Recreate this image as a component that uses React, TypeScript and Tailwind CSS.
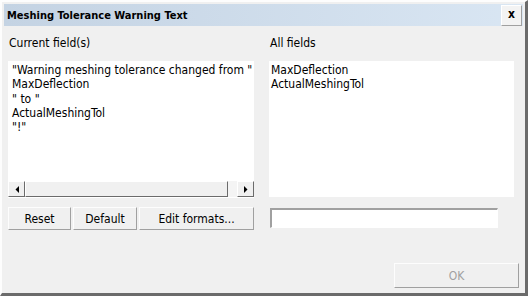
import React from "react";

const font = { fontFamily: '"DejaVu Sans Condensed", "DejaVu Sans", "Liberation Sans", sans-serif' };

function ArrowLeft() {
  return (
    <svg width="4" height="7" viewBox="0 0 4 7">
      <polygon points="4,0 4,7 0.5,3.5" fill="#000" />
    </svg>
  );
}
function ArrowRight() {
  return (
    <svg width="4" height="7" viewBox="0 0 4 7">
      <polygon points="0,0 0,7 3.5,3.5" fill="#000" />
    </svg>
  );
}

export default function App() {
  const lines = [
    '"Warning meshing tolerance changed from "',
    "MaxDeflection",
    '" to "',
    "ActualMeshingTol",
    '"!"',
  ];
  return (
    <div
      className="w-[528px] h-[296px] bg-[#f0f0f0] border-l-2 border-t-2 border-l-[#fdfdfd] border-t-[#fdfdfd] border-r-[3px] border-b-[3px] border-r-[#6b6b6b] border-b-[#6b6b6b] text-[12px] text-black flex flex-col"
      style={font}
    >
      <div className="p-[2px] flex flex-col flex-1">
        {/* Title bar */}
        <div className="h-[22px] flex items-center justify-between pl-[3px] pr-[1px] bg-gradient-to-r from-[#c4d3e3] to-[#d9e6f3]">
          <span className="font-bold text-[11px] leading-none">Meshing Tolerance Warning Text</span>
          <div className="w-[21px] h-[21px] flex items-center justify-center bg-[#f3f3f3] border border-t-[#ffffff] border-l-[#ffffff] border-r-[#a0a0a0] border-b-[#a0a0a0] text-[12px] font-bold leading-none pb-[2px]">
            x
          </div>
        </div>

        {/* Content */}
        <div className="flex pl-[4px] pt-[10px] gap-[15px]">
          {/* Left column */}
          <div className="w-[246px] flex flex-col">
            <div className="pl-[1px] h-[14px] leading-[14px]">Current field(s)</div>
            <div className="mt-[11px] h-[137px] bg-white flex flex-col">
              <div className="flex-1 pl-[4px] pt-[2px] leading-[14.3px] whitespace-nowrap overflow-hidden">
                {lines.map((l, i) => (
                  <div key={i}>{l}</div>
                ))}
              </div>
              <div className="h-[16px] mb-[1px] flex bg-[#f4f4f4]">
                <div className="w-[17px] h-[16px] flex items-center justify-center bg-[#f0f0f0] border border-t-white border-l-white border-r-[#6b6b6b] border-b-[#6b6b6b]">
                  <ArrowLeft />
                </div>
                <div className="w-[203px] h-[16px] bg-[#f0f0f0] border border-t-white border-l-white border-r-[#6b6b6b] border-b-[#6b6b6b]" />
                <div className="flex-1" />
                <div className="w-[17px] h-[16px] flex items-center justify-center bg-[#f0f0f0] border border-t-white border-l-white border-r-[#6b6b6b] border-b-[#6b6b6b]">
                  <ArrowRight />
                </div>
              </div>
            </div>
            <div className="mt-[9px] flex gap-[2px]">
              {[
                ["Reset", "w-[63px]"],
                ["Default", "w-[64px]"],
                ["Edit formats...", "flex-1"],
              ].map(([t, w]) => (
                <div
                  key={t}
                  className={`${w} h-[23px] flex items-center justify-center bg-[#f0f0f0] border border-t-[#fdfdfd] border-l-[#fdfdfd] border-r-[#a0a0a0] border-b-[#a0a0a0]`}
                >
                  {t}
                </div>
              ))}
            </div>
          </div>

          {/* Right column */}
          <div className="w-[245px] flex flex-col">
            <div className="pl-[1px] h-[14px] leading-[14px]">All fields</div>
            <div className="mt-[11px] h-[136px] bg-white pl-[2px] pt-[2px] leading-[14.3px]">
              <div>MaxDeflection</div>
              <div>ActualMeshingTol</div>
            </div>
            <div className="mt-[11px] ml-[1px] w-[228px] h-[20px] bg-white border-t-2 border-l-2 border-t-[#a0a0a0] border-l-[#a0a0a0] border-r border-b border-r-white border-b-white" />
          </div>
        </div>

        {/* Bottom OK */}
        <div className="flex justify-end pr-[4px] mt-[33px]">
          <div className="w-[125px] h-[25px] flex items-center justify-center text-[#a0a0a0] bg-[#f0f0f0] border border-t-[#fdfdfd] border-l-[#fdfdfd] border-r-[#a0a0a0] border-b-[#a0a0a0] text-[12px]">
            OK
          </div>
        </div>
      </div>
    </div>
  );
}
